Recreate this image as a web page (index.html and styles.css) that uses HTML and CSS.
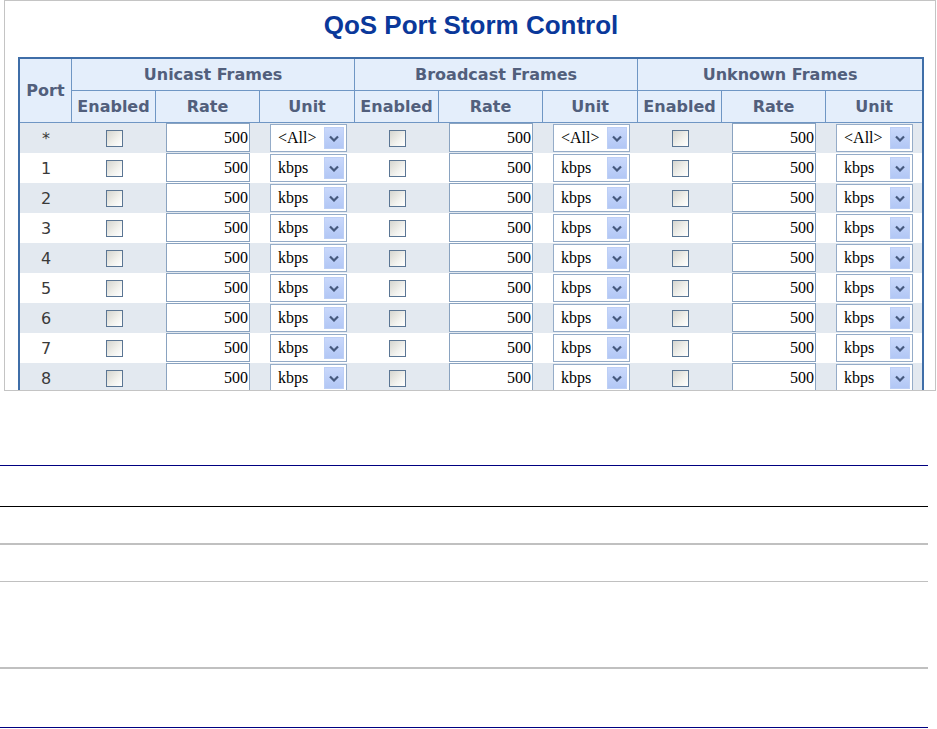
FILE: index.html
```html
<!DOCTYPE html>
<html>
<head>
<meta charset="utf-8">
<title>QoS Port Storm Control</title>
<link rel="stylesheet" href="styles.css">
</head>
<body>
<div class="frame">
  <div class="wrap">
    <h1 class="title">QoS Port Storm Control</h1>
    <table class="storm">
      <colgroup>
        <col class="c-port"><col class="c-en"><col class="c-rate"><col class="c-unit">
        <col class="c-en"><col class="c-rate"><col class="c-unit">
        <col class="c-en"><col class="c-rate"><col class="c-unit-last">
      </colgroup>
      <thead>
        <tr class="h1">
          <th rowspan="2" class="hport">Port</th>
          <th colspan="3">Unicast Frames</th>
          <th colspan="3">Broadcast Frames</th>
          <th colspan="3" class="last">Unknown Frames</th>
        </tr>
        <tr class="h2">
          <th>Enabled</th><th>Rate</th><th>Unit</th>
          <th>Enabled</th><th>Rate</th><th>Unit</th>
          <th>Enabled</th><th>Rate</th><th class="last">Unit</th>
        </tr>
      </thead>
      <tbody id="rows"></tbody>
    </table>
  </div>
</div>
<div class="rule navy r1"></div>
<div class="rule black r2"></div>
<div class="rule gray2 r3"></div>
<div class="rule gray1 r4"></div>
<div class="rule gray2 r5"></div>
<div class="rule navy r6"></div>
<script src="app.js"></script>
</body>
</html>
```

FILE: app.js
```js
(function () {
  var ports = ['*', '1', '2', '3', '4', '5', '6', '7', '8'];
  var chevron = '<svg class="chev" viewBox="0 0 10 7" width="10" height="7"><polyline points="1,1.5 5,5.5 9,1.5" fill="none" stroke="#46597e" stroke-width="2.2"/></svg>';
  function group(unit) {
    return '<td class="en"><input type="checkbox" class="cb"></td>' +
      '<td class="rate"><input type="text" class="num" value="500"></td>' +
      '<td class="unit"><span class="sel"><span class="val">' + unit + '</span><span class="btn">' + chevron + '</span></span></td>';
  }
  var html = '';
  ports.forEach(function (p, i) {
    var unit = p === '*' ? '&lt;All&gt;' : 'kbps';
    html += '<tr class="' + (i % 2 === 0 ? 'alt' : 'plain') + '"><td class="port">' + p + '</td>' +
      group(unit) + group(unit) + group(unit) + '</tr>';
  });
  document.getElementById('rows').innerHTML = html;
})();
```

FILE: styles.css
```css
html, body {
  margin: 0;
  padding: 0;
  background: #ffffff;
}

.frame {
  margin-left: 4px;
  width: 932px;
  height: 391px;
  box-sizing: border-box;
  border: 1px solid #c4c4c4;
  overflow: hidden;
  padding-left: 13px;
}

.wrap {
  width: 906px;
}

.title {
  margin: 9px 0 17px 0;
  height: 30px;
  line-height: 30px;
  text-align: center;
  font-family: "Liberation Sans", Arial, sans-serif;
  font-weight: bold;
  font-size: 26px;
  color: #0a389a;
}

.storm {
  width: 906px;
  box-sizing: border-box;
  table-layout: fixed;
  border-collapse: separate;
  border-spacing: 0;
  border: 2px solid #3f6ea8;
}

.c-port { width: 52px; }
.c-en { width: 84px; }
.c-rate { width: 104px; }
.c-unit { width: 95px; }
.c-unit-last { width: 96px; }

.storm th {
  padding: 0;
  background: #e4eefb;
  color: #525f7c;
  font-family: "DejaVu Sans", Verdana, sans-serif;
  font-weight: bold;
  font-size: 16px;
  text-align: center;
  vertical-align: middle;
  border-right: 1px solid #6f96c4;
  border-bottom: 1px solid #6f96c4;
}

.storm th.last {
  border-right: none;
}

.storm .h1 th {
  height: 31px;
}

.storm .h2 th {
  height: 31px;
}

.storm td {
  padding: 0;
  height: 30px;
  vertical-align: top;
}

.storm tr.alt td {
  background: #e3e9f0;
}

.storm tr.plain td {
  background: #ffffff;
}

.storm td.port {
  text-align: center;
  vertical-align: middle;
  font-family: "DejaVu Sans", Verdana, sans-serif;
  font-size: 16px;
  color: #3a3a3a;
}

.storm td.en {
  text-align: center;
  vertical-align: middle;
}

.cb {
  -webkit-appearance: none;
  appearance: none;
  display: block;
  margin: 0 auto;
  width: 17px;
  height: 17px;
  box-sizing: border-box;
  border: 1px solid #5a7593;
  background: linear-gradient(135deg, #d5d5cf 0%, #f2f2ee 60%, #ffffff 100%);
}

.storm td.rate {
  padding: 0 10px;
}

.num {
  -webkit-appearance: none;
  appearance: none;
  display: block;
  width: 84px;
  height: 29px;
  margin: 0;
  box-sizing: border-box;
  border: 1px solid #8aa3c0;
  background: #ffffff;
  padding: 0 1px 0 0;
  text-align: right;
  font-family: "Liberation Serif", "Times New Roman", serif;
  font-size: 16px;
  color: #000000;
  outline: none;
}

.storm td.unit {
  padding-left: 10px;
}

.sel {
  display: flex;
  align-items: center;
  justify-content: space-between;
  width: 77px;
  height: 28px;
  margin-top: 1px;
  box-sizing: border-box;
  border: 1px solid #95acc8;
  padding: 2px 2px 2px 7px;
  background: #ffffff;
  font-family: "Liberation Serif", "Times New Roman", serif;
  font-size: 16px;
  color: #000000;
}

.btn {
  display: flex;
  align-items: center;
  justify-content: center;
  width: 20px;
  height: 22px;
  box-sizing: border-box;
  border: 1px solid #bdcff6;
  background: linear-gradient(180deg, #c9d8fb 0%, #b2c7f5 100%);
}

.chev {
  display: block;
}

.rule {
  width: 928px;
}

.navy { height: 1px; background: #000080; }
.black { height: 1px; background: #000000; }
.gray1 { height: 1px; background: #c0c0c0; }
.gray2 { height: 2px; background: #c0c0c0; }

.r1 { margin-top: 74px; }
.r2 { margin-top: 40px; }
.r3 { margin-top: 36px; }
.r4 { margin-top: 36px; }
.r5 { margin-top: 85px; }
.r6 { margin-top: 58px; }
```
